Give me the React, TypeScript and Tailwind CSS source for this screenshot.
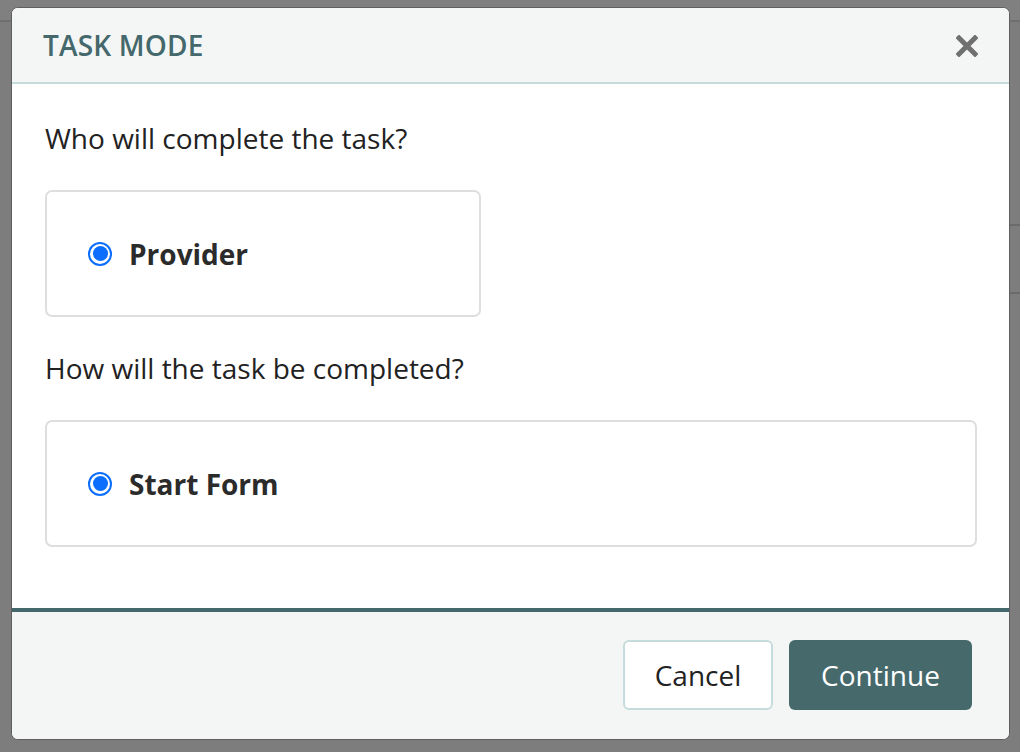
import React from 'react'

function Radio() {
  return (
    <span className="flex h-[24px] w-[24px] shrink-0 items-center justify-center rounded-full border-2 border-[#0b6efd] bg-white">
      <span className="h-[15px] w-[15px] rounded-full bg-[#0b6efd]" />
    </span>
  )
}

function Option({ label, width }: { label: string; width: string }) {
  return (
    <div className={`flex h-[127px] items-center rounded-[7px] border-2 border-[#dedede] pl-[41px] ${width}`}>
      <Radio />
      <span className="ml-[17px] text-[28px] font-bold text-[#2b2b2b]">{label}</span>
    </div>
  )
}

export default function App() {
  return (
    <div
      className="relative h-[752px] w-[1020px] overflow-hidden bg-[#7d7d7d]"
      style={{ fontFamily: '"Open Sans", "Noto Sans", sans-serif' }}
    >
      {/* faded page behind the overlay */}
      <div className="h-[22px] border-b-2 border-[#6f6f6f] bg-[#808080]" />
      <div className="absolute right-0 top-[224px] h-[2px] w-[12px] bg-[#6a6a6a]" />
      <div className="absolute right-0 top-[292px] h-[2px] w-[12px] bg-[#6a6a6a]" />

      <div className="absolute left-[11px] top-[7px] flex h-[733px] w-[999px] flex-col overflow-hidden rounded-[7px] border border-[#5f5f5f] bg-white">
        <div className="flex h-[76px] shrink-0 items-center justify-between border-b-2 border-[#c6dcdc] bg-[#f4f6f5] pl-[31px] pr-[31px]">
          <h2 className="text-[28px] font-semibold tracking-[0.2px] text-[#44686b]">TASK MODE</h2>
          <svg width="22" height="22" viewBox="0 0 22 22" className="mt-[1px]">
            <path d="M3 3 L19 19 M19 3 L3 19" stroke="#707070" strokeWidth="5" strokeLinecap="square" />
          </svg>
        </div>

        <div className="flex flex-1 flex-col px-[33px] pt-[37px]">
          <p className="text-[28px] leading-[34px] text-[#222]">Who will complete the task?</p>
          <div className="mt-[35px]">
            <Option label="Provider" width="w-[436px]" />
          </div>
          <p className="mt-[34px] text-[28px] leading-[34px] text-[#222]">How will the task be completed?</p>
          <div className="mt-[35px]">
            <Option label="Start Form" width="w-[932px]" />
          </div>
        </div>

        <div className="flex h-[131px] shrink-0 items-center justify-end gap-[16px] border-t-4 border-[#44686b] bg-[#f4f6f5] pr-[37px] pb-[1px]">
          <button className="h-[70px] w-[150px] rounded-[6px] border-2 border-[#c6dcdc] bg-white text-[28px] text-[#222]">
            Cancel
          </button>
          <button className="h-[70px] w-[183px] rounded-[6px] bg-[#46696c] text-[28px] text-white">
            Continue
          </button>
        </div>
      </div>
    </div>
  )
}
